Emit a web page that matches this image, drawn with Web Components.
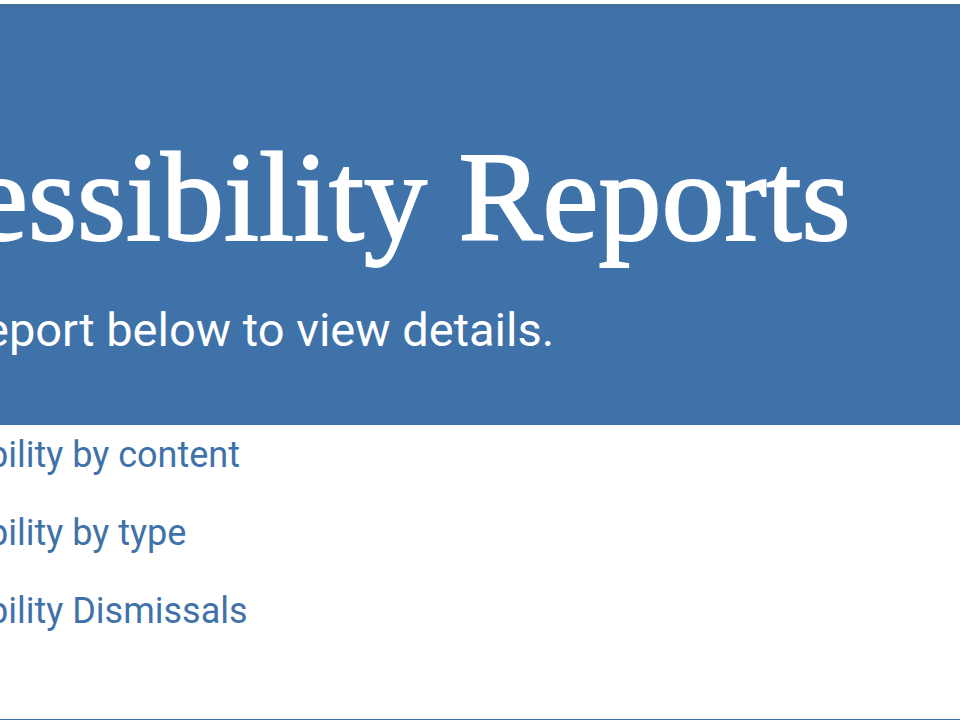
<!DOCTYPE html>
<html lang="en">
<head>
<meta charset="utf-8">
<title>Accessibility Reports</title>
<style>
  body { margin: 0; background: #fff; overflow-x: hidden; }
</style>
</head>
<body>
<reports-page>
  <report-hero>
    <span slot="title">essibility Reports</span>
    <span slot="lead">eport below to view details.</span>
  </report-hero>
  <report-list>
    <report-link href="#content">bility by content</report-link>
    <report-link href="#type">bility by type</report-link>
    <report-link href="#dismissals">bility Dismissals</report-link>
  </report-list>
</reports-page>

<template id="page">
  <style>
    :host {
      --blue: #3f72a9;
      display: block;
      padding-top: 4px;
      font-family: Roboto, "Liberation Sans", sans-serif;
    }
  </style>
  <main><slot></slot></main>
</template>

<template id="hero">
  <style>
    :host { display: block; padding: 120px 0 59px; background: var(--blue); border-top: 2px solid #456d99; color: #fff; overflow: hidden; }
    h1, p { margin: 0; white-space: nowrap; }
    h1 { margin-left: -28px; font: 400 126px/144px "Liberation Serif", serif; -webkit-text-stroke: 2px #fff; }
    p { margin: 24px 0 0 -16px; font-size: 47px; line-height: 72px; }
  </style>
  <h1><slot name="title"></slot></h1>
  <p><slot name="lead"></slot></p>
</template>

<template id="list">
  <style>
    :host { display: block; padding-bottom: 78px; border-bottom: 1px solid var(--blue); }
    nav { display: flex; flex-direction: column; align-items: flex-start; gap: 18px; }
  </style>
  <nav aria-label="Reports"><slot></slot></nav>
</template>

<template id="link">
  <style>
    :host { display: block; }
    a { display: block; margin-left: -12px; color: var(--blue); font-size: 36px; line-height: 60px; text-decoration: none; white-space: nowrap; }
    a:hover { text-decoration: underline; }
  </style>
  <a><slot></slot></a>
</template>

<script>
  class TemplateElement extends HTMLElement {
    constructor() {
      super();
      const template = document.getElementById(this.constructor.template);
      this.attachShadow({ mode: "open" }).append(template.content.cloneNode(true));
    }
  }
  class ReportsPage extends TemplateElement { static template = "page"; }
  class ReportHero extends TemplateElement { static template = "hero"; }
  class ReportList extends TemplateElement { static template = "list"; }
  class ReportLink extends TemplateElement {
    static template = "link";
    connectedCallback() {
      this.shadowRoot.querySelector("a").href = this.getAttribute("href");
    }
  }
  customElements.define("reports-page", ReportsPage);
  customElements.define("report-hero", ReportHero);
  customElements.define("report-list", ReportList);
  customElements.define("report-link", ReportLink);
</script>
</body>
</html>
